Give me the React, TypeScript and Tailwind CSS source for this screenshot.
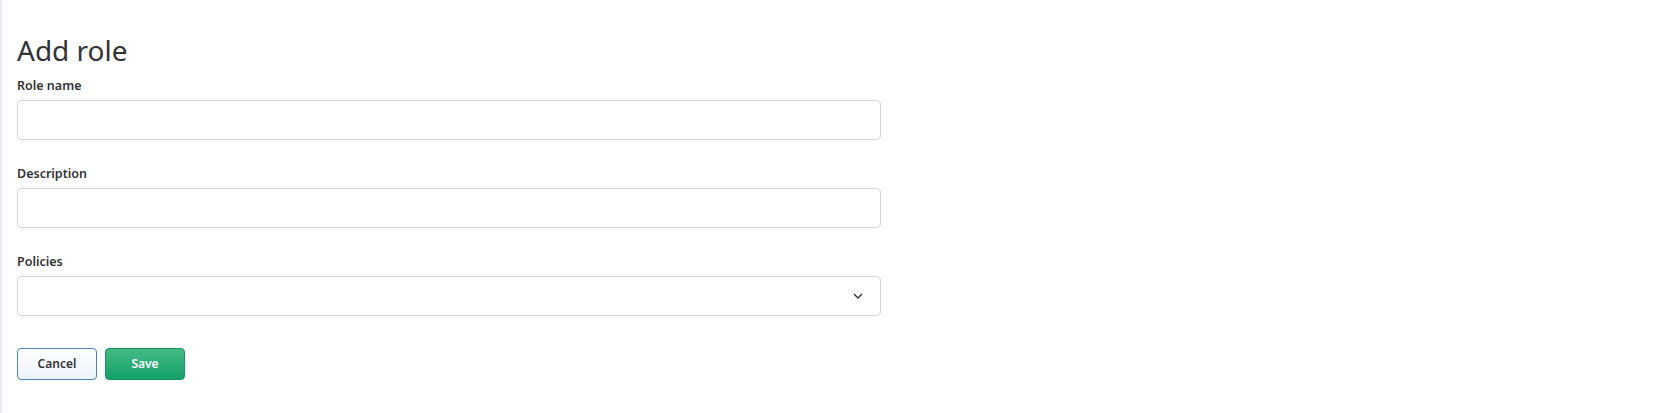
import React, { useState } from 'react';

const Field: React.FC<{ label: string; children: React.ReactNode }> = ({ label, children }) => (
  <div className="mb-6">
    <label className="block mb-1 text-[12.5px] leading-5 font-semibold text-[#333]">{label}</label>
    {children}
  </div>
);

const App: React.FC = () => {
  const [name, setName] = useState('');
  const [desc, setDesc] = useState('');

  return (
    <div
      className="min-h-[413px] bg-white border-l-2 border-[#e9edf3] pl-[15px] pt-8"
      style={{ fontFamily: '"Noto Sans", "Liberation Sans", sans-serif' }}
    >
      <div className="w-[864px]">
        <h1 className="text-[28px] leading-9 font-normal text-[#333] mb-2">Add role</h1>

        <Field label="Role name">
          <input
            value={name}
            onChange={(e) => setName(e.target.value)}
            className="block w-full h-10 px-3 rounded border border-[#d3d3d3] bg-white text-sm outline-none"
          />
        </Field>

        <Field label="Description">
          <input
            value={desc}
            onChange={(e) => setDesc(e.target.value)}
            className="block w-full h-10 px-3 rounded border border-[#d3d3d3] bg-white text-sm outline-none"
          />
        </Field>

        <Field label="Policies">
          <button className="flex items-center justify-end w-full h-10 px-4 rounded border border-[#d3d3d3] bg-white">
            <svg width="10" height="6" viewBox="0 0 10 6" fill="none" className="mr-[1px]">
              <path d="M1 1l4 4 4-4" stroke="#333" strokeWidth="1.4" />
            </svg>
          </button>
        </Field>

        <div className="flex gap-2 pt-2">
          <button className="w-20 h-8 rounded border border-[#4f80c0] bg-gradient-to-b from-white to-[#ebf3fd] text-xs font-semibold text-[#333]">
            Cancel
          </button>
          <button className="w-20 h-8 rounded border border-[#15955f] bg-gradient-to-b from-[#40bb83] to-[#12a06a] text-xs font-semibold text-white">
            Save
          </button>
        </div>
      </div>
    </div>
  );
};

export default App;
